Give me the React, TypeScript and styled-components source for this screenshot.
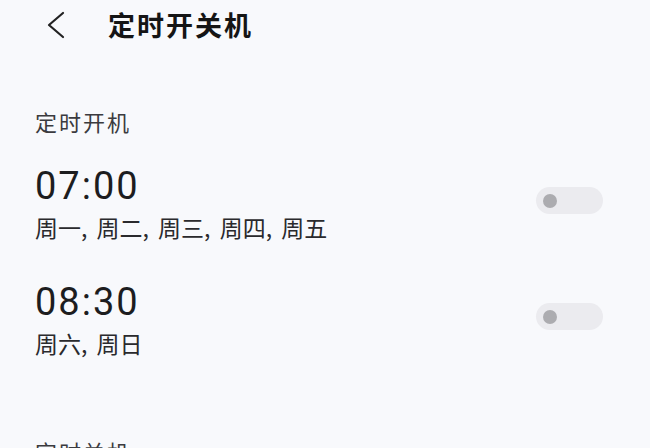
import styled, { createGlobalStyle } from "styled-components";

interface I_Schedule {
    Id: string;
    Time: string;
    Days: string;
    Enabled: boolean;
}

const GlobalStyle = createGlobalStyle`
    html, body {
        margin: 0;
        padding: 0;
        background-color: #f8f9fc;
    }
    body {
        font-family: "Noto Sans CJK SC", "Noto Sans", sans-serif;
        overflow: hidden;
    }
`;

const Page = styled.div`
    width: 650px;
    height: 448px;
    overflow: hidden;
    background-color: #f8f9fc;
`;

const Header = styled.div`
    height: 50px;
    display: flex;
    align-items: center;
    padding-left: 45px;
`;

const BackBtn = styled.div`
    width: 22px;
    height: 30px;
    display: flex;
    align-items: center;
    justify-content: center;
`;

const Title = styled.div`
    margin-left: 41px;
    font-size: 27px;
    font-weight: bold;
    color: #151515;
    line-height: 36px;
    letter-spacing: 2px;
`;

const SectionTitle = styled.div`
    margin-top: 56px;
    padding-left: 35px;
    font-size: 22px;
    line-height: 30px;
    letter-spacing: 2px;
    color: #3b3b3f;
`;

const List = styled.div`
    margin-top: 28px;
    display: flex;
    flex-direction: column;
    gap: 38px;
`;

const Row = styled.div`
    display: flex;
    justify-content: space-between;
    align-items: flex-start;
    padding: 0px 47px 0px 35px;
`;

const TimeBox = styled.div`
    display: flex;
    flex-direction: column;
`;

const TimeText = styled.div`
    font-family: Roboto, "Noto Sans", sans-serif;
    font-size: 38px;
    line-height: 44px;
    letter-spacing: 2px;
    color: #1d1d1f;
`;

const DaysText = styled.div`
    margin-top: 4px;
    font-size: 23px;
    line-height: 30px;
    word-spacing: 4px;
    color: #2a2a2d;
`;

const Switch = styled.div<{ $on: boolean }>`
    margin-top: 23px;
    width: 67px;
    height: 27px;
    border-radius: 14px;
    background-color: ${(p) => (p.$on ? "#3a7bf7" : "#ebebef")};
    display: flex;
    align-items: center;
    justify-content: ${(p) => (p.$on ? "flex-end" : "flex-start")};
    padding: 0px 7px;
    box-sizing: border-box;
`;

const Knob = styled.div<{ $on: boolean }>`
    width: 14px;
    height: 14px;
    border-radius: 50%;
    background-color: ${(p) => (p.$on ? "#ffffff" : "#acacb0")};
`;

const NextSection = styled(SectionTitle)`
    margin-top: 78px;
`;

const Schedules: I_Schedule[] = [
    { Id: "on1", Time: "07:00", Days: "周一, 周二, 周三, 周四, 周五", Enabled: false },
    { Id: "on2", Time: "08:30", Days: "周六, 周日", Enabled: false },
];

export default function App() {
    return (
        <Page>
            <GlobalStyle />
            <Header>
                <BackBtn>
                    <svg width="22" height="30" viewBox="0 0 22 30">
                        <path d="M18 3 L4 15 L18 27" fill="none" stroke="#222" strokeWidth="2.2" strokeLinecap="round" strokeLinejoin="round" />
                    </svg>
                </BackBtn>
                <Title>定时开关机</Title>
            </Header>
            <SectionTitle>定时开机</SectionTitle>
            <List>
                {
                    Schedules.map((data) => {
                        return (
                            <Row key={data.Id}>
                                <TimeBox>
                                    <TimeText>{data.Time}</TimeText>
                                    <DaysText>{data.Days}</DaysText>
                                </TimeBox>
                                <Switch $on={data.Enabled}>
                                    <Knob $on={data.Enabled} />
                                </Switch>
                            </Row>
                        );
                    })
                }
            </List>
            <NextSection>定时关机</NextSection>
        </Page>
    );
}
